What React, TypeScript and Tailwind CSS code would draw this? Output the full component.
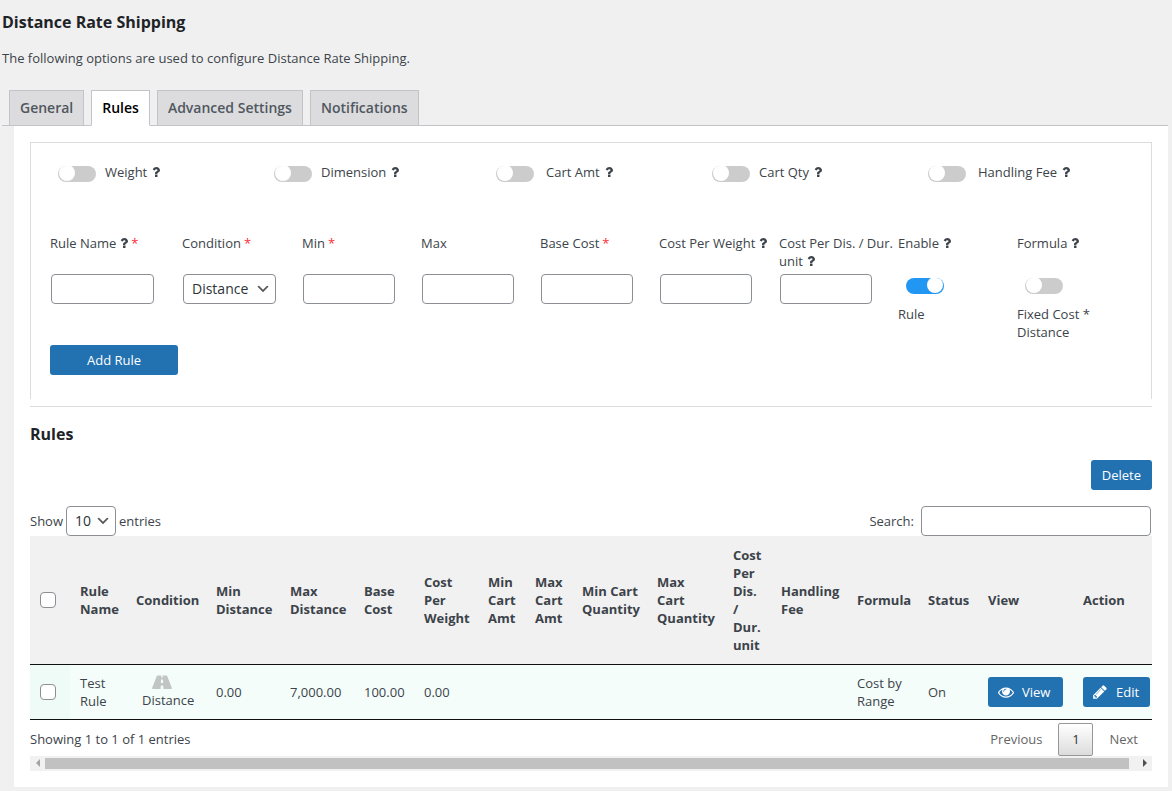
import { Fragment, type ReactNode } from "react";

function QuestionIcon() {
  return (
    <svg viewBox="380 250 1030 1290" className="inline-block h-[10px] w-2 align-baseline" fill="currentColor" aria-hidden="true">
      <path d="M1088 1256v240q0 16-12 28t-28 12h-240q-16 0-28-12t-12-28v-240q0-16 12-28t28-12h240q16 0 28 12t12 28zm316-600q0 54-15.5 101t-35 76.5-55 59.5-57.5 43.5-61 35.5q-41 23-68.5 65t-27.5 67q0 17-12 32.5t-28 15.5h-240q-15 0-25.5-18.5t-10.5-37.5v-45q0-83 65-156.5t143-108.5q59-27 84-56t25-76q0-42-46.5-74t-107.5-32q-65 0-108 29-35 25-107 115-13 16-31 16-12 0-25-8l-164-125q-13-10-15.5-25t5.5-28q160-266 464-266 80 0 161 31t146 83 106 127.5 41 158.5z" />
    </svg>
  );
}

function EyeIcon() {
  return (
    <svg viewBox="0 0 1792 1792" className="size-4" fill="currentColor" aria-hidden="true">
      <path d="M1664 960q-152-236-381-353 61 104 61 225 0 185-131.5 316.5t-316.5 131.5-316.5-131.5-131.5-316.5q0-121 61-225-229 117-381 353 133 205 333.5 326.5t434.5 121.5 434.5-121.5 333.5-326.5zm-720-384q0-20-14-34t-34-14q-125 0-214.5 89.5t-89.5 214.5q0 20 14 34t34 14 34-14 14-34q0-86 61-147t147-61q20 0 34-14t14-34zm848 384q0 34-20 69-140 230-376.5 368.5t-499.5 138.5-499.5-139-376.5-368q-20-35-20-69t20-69q140-229 376.5-368t499.5-139 499.5 139 376.5 368q20 35 20 69z" />
    </svg>
  );
}

function PencilIcon() {
  return (
    <svg viewBox="0 0 1792 1792" className="size-4" fill="currentColor" aria-hidden="true">
      <path d="M491 1536l91-91-235-235-91 91v107h128v128h107zm523-928q0-22-22-22-10 0-17 7l-542 542q-7 7-7 17 0 22 22 22 10 0 17-7l542-542q7-7 7-17zm-54-192l416 416-832 832h-416v-416zm683 96q0 53-37 90l-166 166-416-416 166-165q36-38 90-38 53 0 91 38l235 234q37 39 37 91z" />
    </svg>
  );
}

function RoadIcon() {
  return (
    <svg viewBox="0 0 20 14" className="ml-2.5 h-3.5 w-5" fill="#c1c6c5" aria-hidden="true">
      <path fillRule="evenodd" d="M5.6 0.5H9.4L9.2 2.4H10.8L10.6 0.5H14.4Q15 0.5 15.2 1.1L19.9 13Q20.1 14 19.2 14H11.4L11.2 10.4H8.8L8.6 14H0.8Q-0.1 14 0.1 13L4.8 1.1Q5 0.5 5.6 0.5ZM9 4.4L8.8 8H11.2L11 4.4Z" />
    </svg>
  );
}

function Toggle({ id, label, on = false }: { id: string; label: string; on?: boolean }) {
  return (
    <input
      id={id}
      type="checkbox"
      role="switch"
      aria-label={label}
      defaultChecked={on}
      className="block h-4 w-[38px] shrink-0 cursor-pointer appearance-none overflow-hidden rounded-full bg-[#ccc] before:-mt-px before:ml-px before:block before:size-4 before:rounded-full before:bg-white checked:bg-[#2196f3] checked:before:ml-[21px]"
    />
  );
}

function Select({ id, className, children }: { id: string; className: string; children: ReactNode }) {
  return (
    <span className={"relative inline-block " + className}>
      <select id={id} className="h-[30px] w-full appearance-none rounded border border-[#8c8f94] bg-white pl-2 text-sm text-[#2c3338]">
        {children}
      </select>
      <svg viewBox="0 0 20 20" className="pointer-events-none absolute top-[7px] right-[5px] size-4" aria-hidden="true">
        <path d="M5 6l5 5 5-5 2 1-7 7-7-7 2-1z" fill="#555" />
      </svg>
    </span>
  );
}

const tabs = ["General", "Rules", "Advanced Settings", "Notifications"];

const features = [
  { label: "Weight", gap: "gap-[9px]" },
  { label: "Dimension", gap: "gap-[9px]" },
  { label: "Cart Amt", gap: "gap-3" },
  { label: "Cart Qty", gap: "gap-[9px]" },
  { label: "Handling Fee", gap: "gap-3" },
];

type FieldProps = { id: string; label: string; help?: boolean; required?: boolean; children: ReactNode };

function Field({ id, label, help, required, children }: FieldProps) {
  return (
    <div>
      <label htmlFor={id} className="block h-10">
        {label}
        {help && (
          <span className="ml-1">
            <QuestionIcon />
          </span>
        )}
        {required && <span className="ml-[3px] text-red-500">*</span>}
      </label>
      {children}
    </div>
  );
}

const textBox = "ml-px block h-[30px] rounded border border-[#8c8f94] bg-white px-2 text-sm";

const columns = [
  { title: "Rule\nName", width: 56 },
  { title: "Condition", width: 80 },
  { title: "Min\nDistance", width: 74 },
  { title: "Max\nDistance", width: 74 },
  { title: "Base\nCost", width: 60 },
  { title: "Cost\nPer\nWeight", width: 64 },
  { title: "Min\nCart\nAmt", width: 47 },
  { title: "Max\nCart\nAmt", width: 47 },
  { title: "Min Cart\nQuantity", width: 75 },
  { title: "Max\nCart\nQuantity", width: 76 },
  { title: "Cost\nPer\nDis.\n/\nDur.\nunit", width: 48 },
  { title: "Handling\nFee", width: 76 },
  { title: "Formula", width: 71 },
  { title: "Status", width: 60 },
  { title: "View", width: 95 },
  { title: "Action", width: 79 },
];

const primary = "flex h-[30px] items-center rounded-[3px] bg-[#2271b1] text-white cursor-pointer";
const tickBox = "block size-4 appearance-none rounded border border-[#8c8f94] bg-white checked:bg-[#2271b1]";
const cell = "pl-2.5";

export default function App() {
  return (
    <div className="min-h-screen bg-[#f0f0f0] pr-1 pb-1 font-['Open_Sans',sans-serif] text-[13px] leading-[18px] text-[#3c434a]">
      <header className="pl-0.5">
        <h1 className="pt-2.5 text-base leading-6 font-bold text-[#1d2327]">Distance Rate Shipping</h1>
        <p className="pt-[15px]">The following options are used to configure Distance Rate Shipping.</p>
        <nav className="mt-[23px] flex gap-[7px] border-b border-[#c3c4c7] pl-[7px]">
          {tabs.map((tab) => (
            <a
              key={tab}
              href={"#" + tab.toLowerCase().replace(" ", "-")}
              className={
                tab === "Rules"
                  ? "-mb-px border border-b-white border-[#c3c4c7] bg-white px-2.5 pt-[5px] pb-[5px] text-sm leading-6 font-semibold text-black"
                  : "border border-b-0 border-[#c3c4c7] bg-[#dcdcde] px-2.5 pt-[5px] pb-1 text-sm leading-6 font-semibold text-[#50575e]"
              }
            >
              {tab}
            </a>
          ))}
        </nav>
      </header>

      <main className="ml-3.5 bg-white px-4 pt-4 pb-4">
        <form className="border border-b-0 border-[#dcdcde] pt-5 pb-6" onSubmit={(e) => e.preventDefault()}>
          <div className="grid grid-cols-[216fr_222fr_216fr_216fr_223fr] pl-[27px]">
            {features.map((f) => (
              <div key={f.label} className={"flex items-start " + f.gap}>
                <div className="pt-[3px]">
                  <Toggle id={"toggle-" + f.label} label={f.label} />
                </div>
                <label htmlFor={"toggle-" + f.label}>
                  {f.label}
                  <span className="ml-[5px]">
                    <QuestionIcon />
                  </span>
                </label>
              </div>
            ))}
          </div>

          <div className="mt-[52px] grid grid-cols-[132fr_120fr_119fr_119fr_119fr_120fr_119fr_119fr_134fr] pl-[19px]">
            <Field id="rule-name" label="Rule Name" help required>
              <input id="rule-name" type="text" className={textBox + " w-[103px]"} />
            </Field>
            <Field id="condition" label="Condition" required>
              <Select id="condition" className="ml-px w-[93px]">
                <option>Distance</option>
              </Select>
            </Field>
            <Field id="min" label="Min" required>
              <input id="min" type="text" className={textBox + " w-[92px]"} />
            </Field>
            <Field id="max" label="Max">
              <input id="max" type="text" className={textBox + " w-[92px]"} />
            </Field>
            <Field id="base-cost" label="Base Cost" required>
              <input id="base-cost" type="text" className={textBox + " w-[92px]"} />
            </Field>
            <Field id="cost-weight" label="Cost Per Weight" help>
              <input id="cost-weight" type="text" className={textBox + " w-[92px]"} />
            </Field>
            <Field id="cost-distance" label="Cost Per Dis. / Dur. unit" help>
              <input id="cost-distance" type="text" className={textBox + " w-[92px]"} />
            </Field>
            <Field id="enable" label="Enable" help>
              <div className="flex flex-col gap-[11px] pt-1">
                <div className="pl-2">
                  <Toggle id="enable" label="Enable rule" on />
                </div>
                <span>Rule</span>
              </div>
            </Field>
            <Field id="formula" label="Formula" help>
              <div className="flex flex-col gap-[11px] pt-1">
                <div className="pl-2">
                  <Toggle id="formula" label="Fixed cost times distance" />
                </div>
                <span>
                  Fixed Cost *<br />
                  Distance
                </span>
              </div>
            </Field>
          </div>

          <button type="submit" className={primary + " mt-1 ml-[19px] w-32 justify-center"}>
            Add Rule
          </button>
        </form>

        <hr className="mt-[7px] border-[#dcdcde]" />

        <h2 className="mt-[15px] text-base leading-6 font-bold text-[#1d2327]">Rules</h2>
        <div className="mt-3.5 flex justify-end">
          <button type="button" className={primary + " px-[11px]"}>
            Delete
          </button>
        </div>

        <div className="mt-4 flex items-center justify-between">
          <label className="flex items-center gap-[3px]">
            Show
            <Select id="length" className="w-[50px]">
              <option>10</option>
            </Select>
            entries
          </label>
          <label className="flex items-center gap-[7px] pr-px">
            Search:
            <input type="search" className="h-[30px] w-[230px] rounded border border-[#8c8f94] bg-white px-2 text-sm" />
          </label>
        </div>

        <table className="w-full table-fixed border-collapse text-left">
          <colgroup>
            <col style={{ width: 40 }} />
            {columns.map((c) => (
              <col key={c.title} style={{ width: c.width }} />
            ))}
          </colgroup>
          <thead>
            <tr className="h-[128px] border-b border-[#111] bg-[#f1f1f1]">
              <th className={cell}>
                <input type="checkbox" aria-label="Select all rules" className={tickBox} />
              </th>
              {columns.map((c) => (
                <th key={c.title} scope="col" className="pl-2.5 font-bold">
                  {c.title.split("\n").map((line, i) => (
                    <Fragment key={i}>
                      {i > 0 && <br />}
                      {line}
                    </Fragment>
                  ))}
                </th>
              ))}
            </tr>
          </thead>
          <tbody>
            <tr className="h-[55px] border-b border-[#111] bg-[#f4fdfa]">
              <td className={cell + " bg-[#eefbf6]"}>
                <input type="checkbox" aria-label="Select Test Rule" className={tickBox} />
              </td>
              <td className={cell}>
                Test
                <br />
                Rule
              </td>
              <td className="pl-4">
                <RoadIcon />
                <span className="mt-0.5 block">Distance</span>
              </td>
              <td className={cell}>0.00</td>
              <td className={cell}>7,000.00</td>
              <td className={cell}>100.00</td>
              <td className={cell}>0.00</td>
              <td />
              <td />
              <td />
              <td />
              <td />
              <td />
              <td className={cell}>
                Cost by
                <br />
                Range
              </td>
              <td className={cell}>On</td>
              <td className={cell}>
                <button type="button" className={primary + " w-[75px] gap-2 pl-2.5"}>
                  <EyeIcon />
                  View
                </button>
              </td>
              <td className={cell}>
                <button type="button" className={primary + " w-[67px] gap-2 pl-[9px]"}>
                  <PencilIcon />
                  Edit
                </button>
              </td>
            </tr>
          </tbody>
        </table>

        <div className="flex items-center justify-between pt-[3px]">
          <p>Showing 1 to 1 of 1 entries</p>
          <div className="flex items-center pr-3.5">
            <button type="button" className="text-[#666]">
              Previous
            </button>
            <button type="button" className="mx-4 h-[33px] w-[35px] rounded-xs border border-[#979797] bg-linear-to-b from-white to-[#dcdcdc] text-[#333]">
              1
            </button>
            <button type="button" className="text-[#666]">
              Next
            </button>
          </div>
        </div>

        <div className="flex h-[15px] items-center bg-[#f1f1f1]">
          <button type="button" aria-label="Scroll left" className="flex h-full w-[15px] items-center justify-center">
            <svg viewBox="0 0 4 8" className="h-2 w-1" fill="#a3a3a3">
              <path d="M4 0V8L0 4Z" />
            </svg>
          </button>
          <div className="h-[11px] flex-1 bg-[#c1c1c1]" />
          <button type="button" aria-label="Scroll right" className="flex h-full w-[23px] items-center justify-end pr-[5px]">
            <svg viewBox="0 0 4 8" className="h-2 w-1" fill="#505050">
              <path d="M0 0V8L4 4Z" />
            </svg>
          </button>
        </div>
      </main>
    </div>
  );
}
